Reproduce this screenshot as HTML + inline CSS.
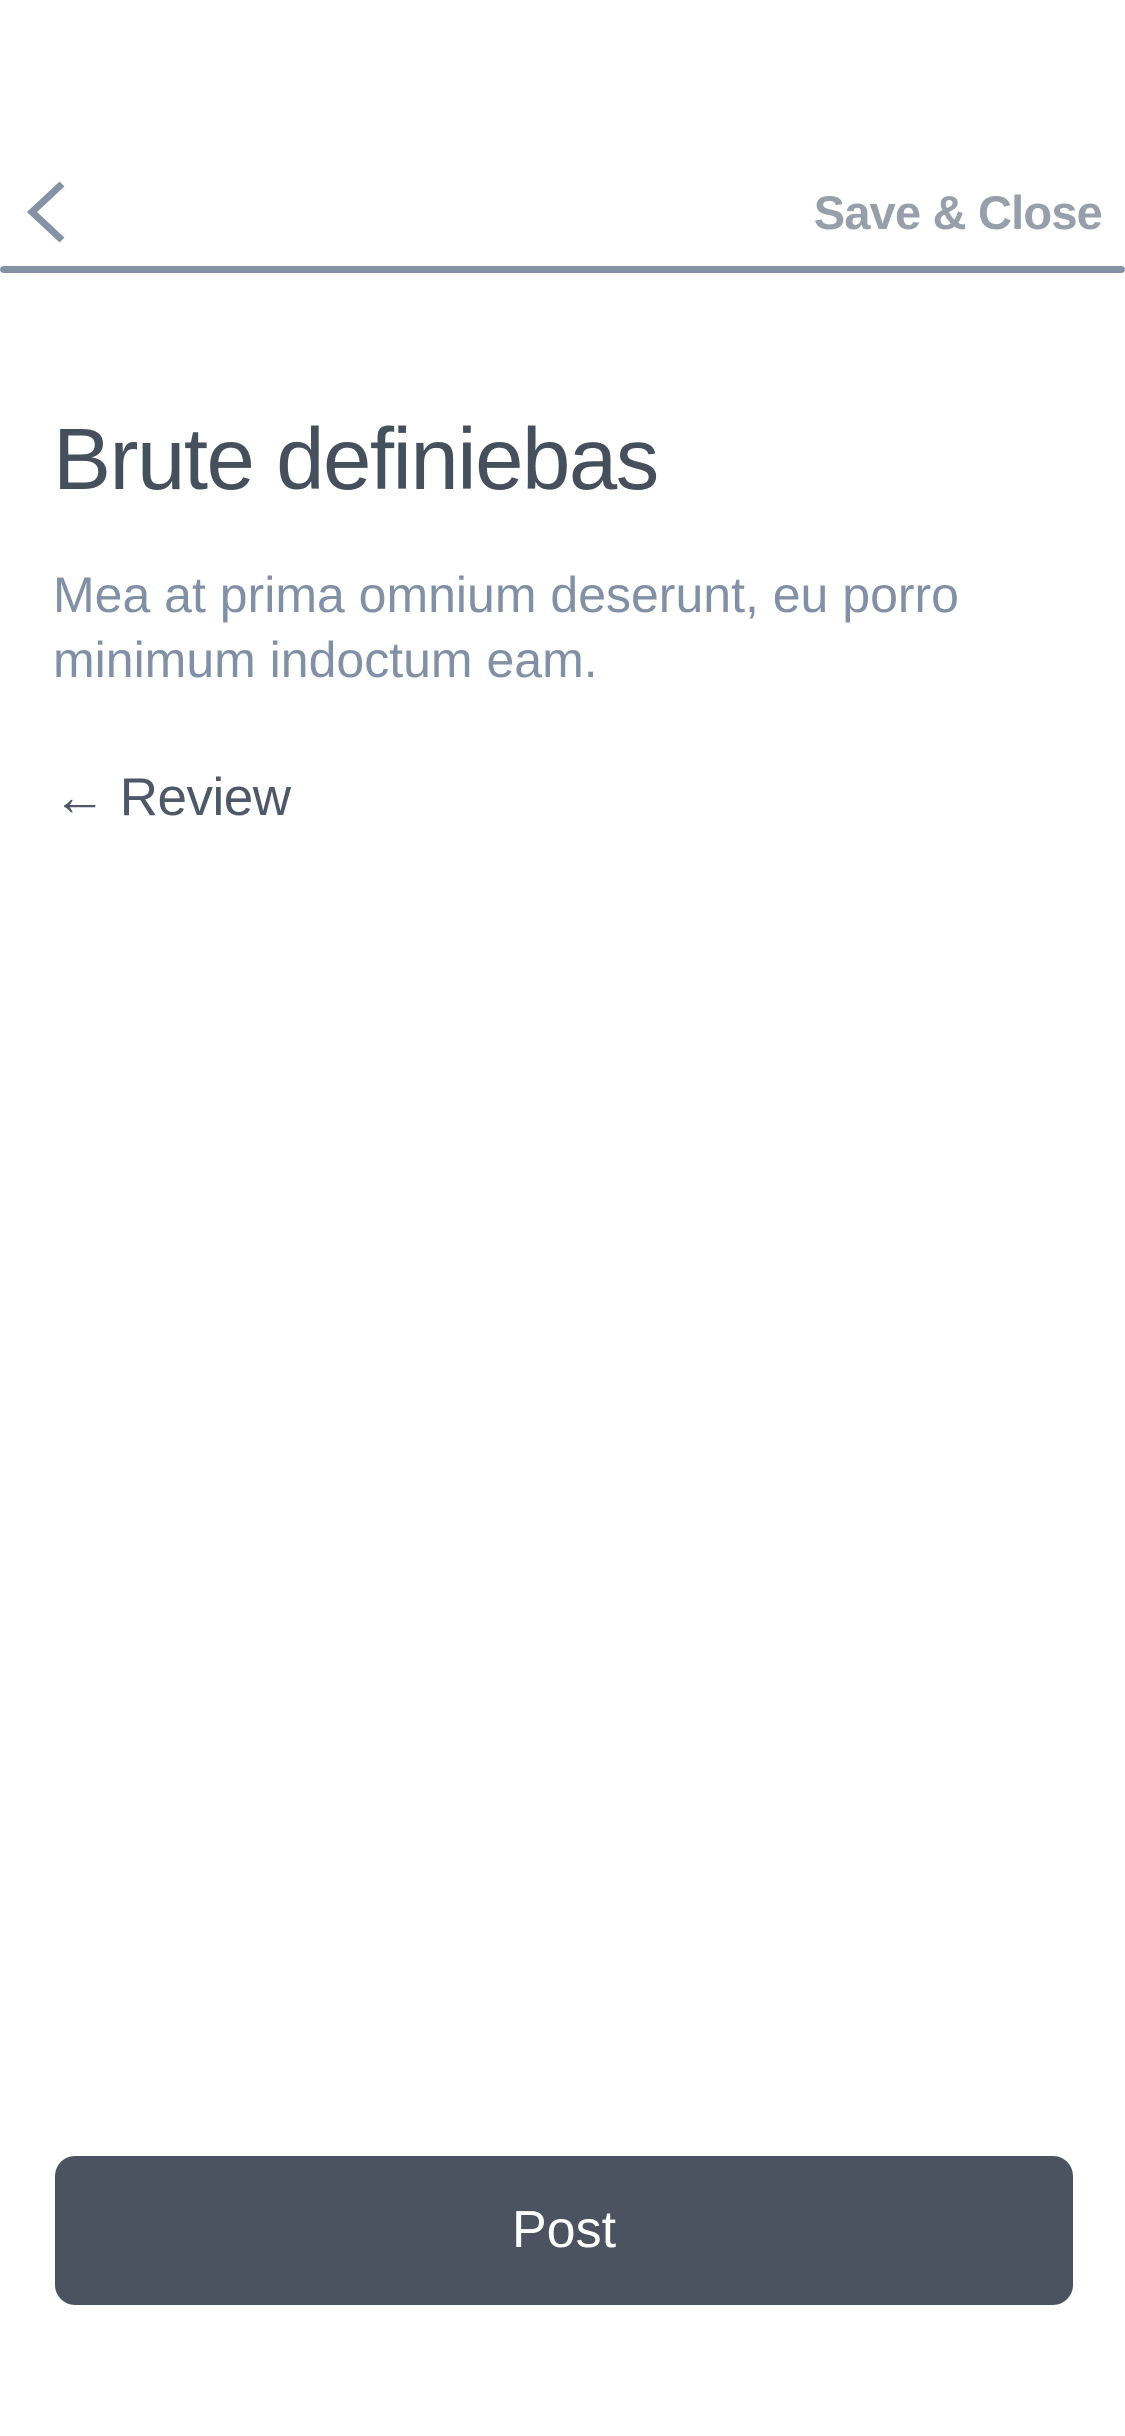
<!DOCTYPE html>
<html><head><meta charset="utf-8"><style>
html,body{margin:0;padding:0;background:#fff;}
body{width:1125px;height:2436px;position:relative;overflow:hidden;font-family:"Liberation Sans",sans-serif;}
.line{position:absolute;left:0;top:266px;width:1125px;height:7px;border-radius:4px;background:#8592a6;}
.save{position:absolute;right:23px;top:185px;font-size:47px;font-weight:bold;color:#979fab;letter-spacing:-0.8px;}
.title{position:absolute;left:53px;top:410px;font-size:87px;color:#464f5c;letter-spacing:-1.5px;white-space:nowrap;}
.para{position:absolute;left:53px;top:563px;font-size:50px;line-height:65px;color:#8290a6;letter-spacing:0px;white-space:nowrap;}
.review{position:absolute;left:53px;top:767px;font-size:53px;color:#4f5868;letter-spacing:-0.5px;}
.btn{position:absolute;left:55px;top:2156px;width:1018px;height:149px;border-radius:20px;background:#4a535f;color:#fff;font-size:52px;text-align:center;line-height:149px;}
</style></head><body>
<svg style="position:absolute;left:22px;top:180px" width="46" height="64" viewBox="0 0 46 64"><path d="M40 4 L10 32 L40 60" fill="none" stroke="#8592a6" stroke-width="7"/></svg>
<div class="save">Save &amp; Close</div>
<div class="line"></div>
<div class="title">Brute definiebas</div>
<div class="para">Mea at prima omnium deserunt, eu porro<br>minimum indoctum eam.</div>
<div class="review">← Review</div>
<div class="btn">Post</div>
</body></html>
